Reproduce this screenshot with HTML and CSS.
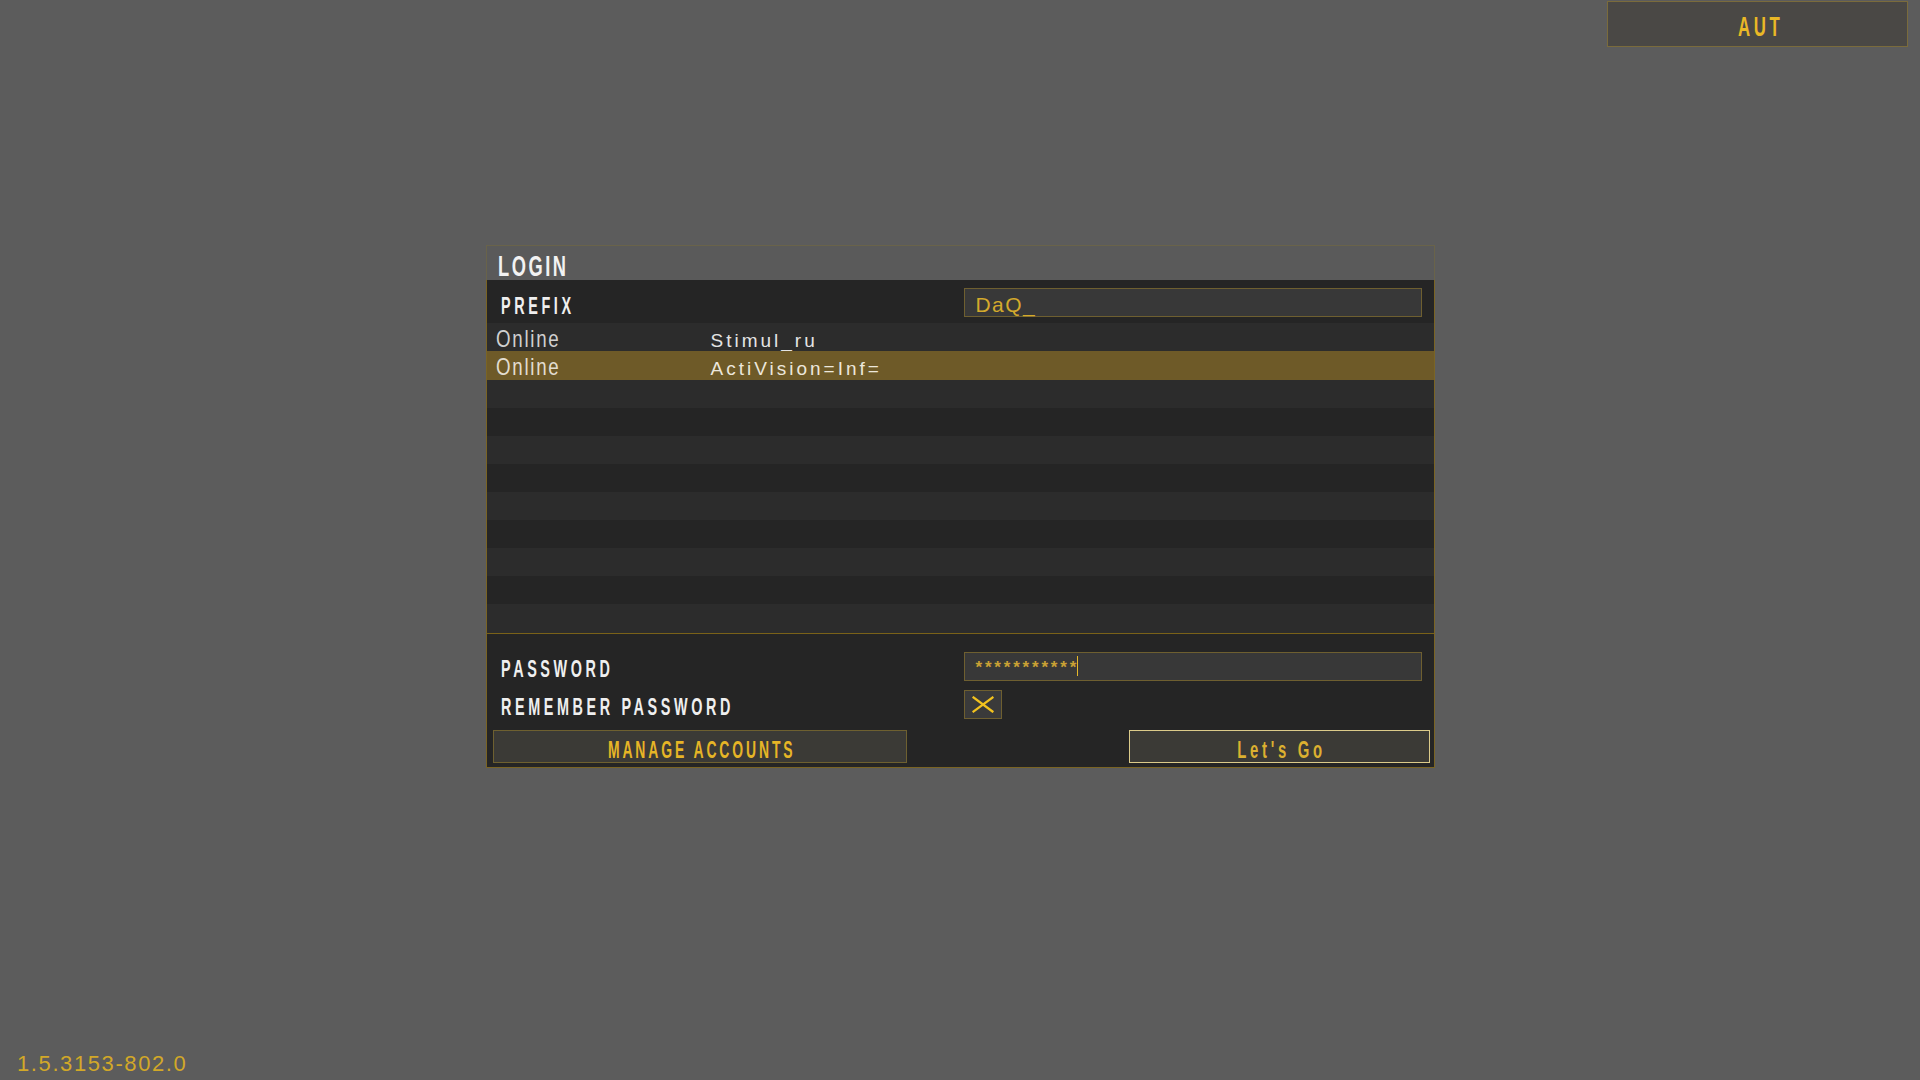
FILE: index.html
```html
<!DOCTYPE html>
<html lang="en">
<head>
<meta charset="utf-8">
<title>Login</title>
<link rel="stylesheet" href="styles.css">
</head>
<body>
<div class="screen">
  <div class="topbar">
    <div class="aut-btn"><span class="cond c-center">AUT</span></div>
  </div>

  <div class="dialog">
    <div class="dlg-head"><span class="cond title">LOGIN</span></div>
    <div class="dlg-body">
      <div class="prefix-row">
        <div class="label"><span class="cond">PREFIX</span></div>
        <div class="field"><span class="field-text">DaQ_</span></div>
      </div>

      <div class="list">
        <div class="row"><span class="status"><span class="cond-light">Online</span></span><span class="name">Stimul_ru</span></div>
        <div class="row sel"><span class="status"><span class="cond-light">Online</span></span><span class="name">ActiVision=Inf=</span></div>
        <div class="row"></div>
        <div class="row"></div>
        <div class="row"></div>
        <div class="row"></div>
        <div class="row"></div>
        <div class="row"></div>
        <div class="row"></div>
        <div class="row"></div>
        <div class="row last"></div>
      </div>

      <div class="bottom">
        <div class="form-row first">
          <div class="label lbl-sm"><span class="cond">PASSWORD</span></div>
          <div class="field"><span class="stars">***********</span><span class="caret"></span></div>
        </div>
        <div class="form-row second">
          <div class="label lbl-sm"><span class="cond">REMEMBER PASSWORD</span></div>
          <div class="check">
            <svg width="22" height="17" viewBox="0 0 22 17"><path d="M1.5 1.5 L20.5 15.5 M20.5 1.5 L1.5 15.5" stroke="#f2c21e" stroke-width="2.2" fill="none" stroke-linecap="square"/></svg>
          </div>
        </div>
        <div class="btn-row">
          <div class="btn btn-manage"><span class="cond c-center">MANAGE ACCOUNTS</span></div>
          <div class="btn btn-go"><span class="cond c-center">Let's Go</span></div>
        </div>
      </div>
    </div>
  </div>

  <div class="version">1.5.3153-802.0</div>
</div>
</body>
</html>
```

FILE: styles.css
```css
html, body {
  margin: 0;
  padding: 0;
}

body {
  background: #5c5c5c;
  font-family: "Liberation Sans", Arial, sans-serif;
}

.screen {
  height: 1080px;
  display: flex;
  flex-direction: column;
}

/* condensed bold label text */
.cond {
  display: inline-block;
  white-space: nowrap;
  font-size: 24px;
  line-height: 24px;
  font-weight: bold;
  letter-spacing: 6px;
  color: #efefef;
  transform: scaleX(0.6);
  transform-origin: 0 50%;
}

.c-center {
  transform-origin: 50% 50%;
  margin-right: -6px;
}

/* top right button */
.topbar {
  display: flex;
  justify-content: flex-end;
  padding: 1px 12px 0 0;
}

.aut-btn {
  width: 301px;
  height: 46px;
  box-sizing: border-box;
  border: 1px solid #7a6b3c;
  background: #4a4845;
  text-align: center;
  padding-top: 10px;
}

.aut-btn .cond {
  font-size: 28px;
  line-height: 30px;
  color: #eab826;
}

/* dialog */
.dialog {
  width: 949px;
  margin: 198px auto 0;
}

.dlg-head {
  height: 35px;
  box-sizing: border-box;
  border: 1px solid #69634a;
  border-bottom: 0;
  background: #5a5a5a;
  padding: 7px 0 0 11px;
}

.cond.title {
  font-size: 29px;
  line-height: 27px;
  letter-spacing: 4px;
  color: #f2f2f2;
  transform: scaleX(0.63);
}

.dlg-body {
  border: 1px solid #7a6424;
  border-top: 0;
  background: #252525;
}

.prefix-row {
  height: 43px;
  display: grid;
  grid-template-columns: 477px 458px;
  background: #252525;
}

.label {
  padding: 14px 0 0 14px;
}

.field {
  height: 29px;
  box-sizing: border-box;
  border: 1px solid #6e5f30;
  background: #383838;
  display: flex;
  align-items: flex-start;
}

.prefix-row .field {
  margin-top: 8px;
}

.field-text {
  padding: 5px 0 0 11px;
  font-size: 21px;
  line-height: 22px;
  letter-spacing: 1.4px;
  color: #d4aa2c;
}

/* list */
.list {
  height: 310px;
}

.row {
  height: 28px;
  box-sizing: border-box;
  display: flex;
  align-items: baseline;
  padding-top: 3px;
  background: #252525;
  overflow: hidden;
}

.row:nth-child(odd) {
  background: #2c2c2c;
}

.row.sel {
  height: 29px;
  background: #6e5a28;
}

.row.last {
  height: 29px;
}

.status {
  width: 215px;
  padding-left: 9px;
  flex: none;
}

.cond-light {
  display: inline-block;
  white-space: nowrap;
  font-size: 24px;
  line-height: 25px;
  letter-spacing: 2.2px;
  color: #d0d0d0;
  transform: scaleX(0.78);
  transform-origin: 0 50%;
}

.name {
  font-size: 19px;
  line-height: 25px;
  letter-spacing: 3px;
  color: #e4e4e4;
  white-space: nowrap;
}

.row.sel .cond-light {
  color: #e2ddd0;
}

.row.sel .name {
  color: #ece7dc;
}

/* bottom section */
.bottom {
  height: 134px;
  box-sizing: border-box;
  border-top: 1px solid #7a6218;
  padding-top: 18px;
}

.form-row {
  height: 29px;
  display: grid;
  grid-template-columns: 477px 458px;
}

.form-row.first {
  margin-bottom: 9px;
}

.form-row.second {
  margin-bottom: 11px;
}

.label.lbl-sm {
  padding-top: 5px;
}

.stars {
  padding: 2px 0 0 11px;
  font-size: 17px;
  line-height: 25px;
  letter-spacing: 2.8px;
  color: #c9a134;
  font-weight: bold;
}

.caret {
  width: 1px;
  height: 20px;
  margin: 3px 0 0 -2px;
  background: #e6b82a;
}

.check {
  width: 38px;
  height: 29px;
  box-sizing: border-box;
  border: 1px solid #6e5f30;
  background: #3a3a3a;
  display: flex;
  align-items: center;
  justify-content: center;
}

.btn-row {
  height: 33px;
  display: flex;
  justify-content: space-between;
  padding: 0 4px 0 6px;
}

.btn {
  height: 33px;
  box-sizing: border-box;
  background: #3b3a36;
  text-align: center;
  padding-top: 6px;
}

.btn .cond {
  line-height: 26px;
  color: #e6b526;
}

.btn-manage {
  width: 414px;
  border: 1px solid #6e6030;
}

.btn-manage .cond {
  letter-spacing: 5px;
  margin-right: -5px;
  transform: scaleX(0.58);
}

.btn-go {
  width: 301px;
  border: 1px solid #dccb8a;
}

.btn-go .cond {
  color: #dcb030;
  transform: scaleX(0.62);
}

/* version */
.version {
  margin-top: auto;
  padding: 0 0 5px 17px;
  font-size: 22px;
  line-height: 22px;
  letter-spacing: 1.6px;
  color: #d2a828;
}
```
